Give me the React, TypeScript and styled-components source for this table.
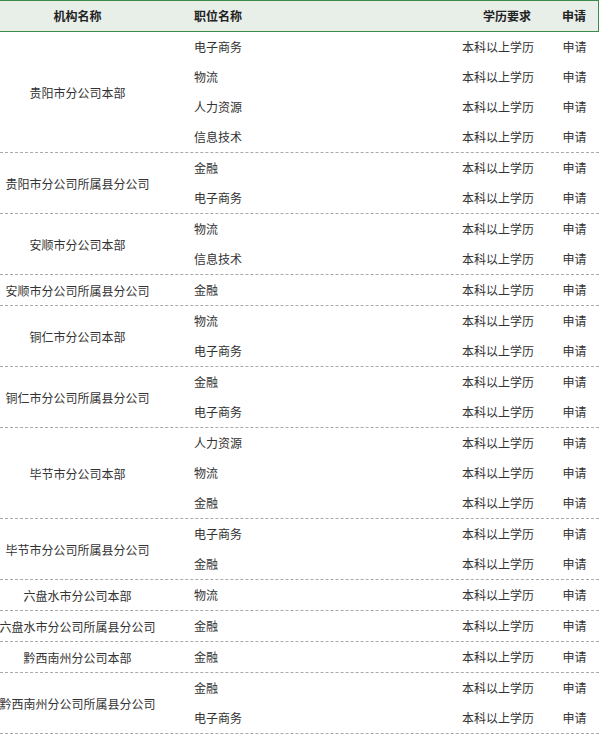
import React from "react";
import styled, { createGlobalStyle } from "styled-components";

const GlobalStyle = createGlobalStyle`
  body {
    margin: 0;
    background: #fff;
    font-family: "Noto Sans CJK SC", "Microsoft YaHei", sans-serif;
    font-size: 12px;
    color: #333;
  }
`;

const Table = styled.div`
  width: 599px;
`;

const Header = styled.div`
  display: grid;
  grid-template-columns: 155px 240px 155px 1fr;
  height: 30px;
  align-items: center;
  background: #e8efe9;
  border-top: 1px solid #3d8b47;
  border-bottom: 1px solid #3d8b47;
  border-right: 1px solid #3d8b47;
  font-weight: bold;
  color: #222;
`;

const Cell = styled.div<{ $align?: "left" | "right" | "center"; $pad?: string }>`
  text-align: ${(p) => p.$align || "left"};
  padding: ${(p) => p.$pad || "0"};
  white-space: nowrap;
  line-height: 30px;
`;

const Group = styled.div`
  display: flex;
  border-bottom: 1px dashed #aaa;
`;

const Org = styled.div`
  width: 155px;
  flex-shrink: 0;
  display: flex;
  align-items: center;
  justify-content: center;
  white-space: nowrap;
`;

const Jobs = styled.div`
  flex: 1;
  display: flex;
  flex-direction: column;
`;

const JobRow = styled.div`
  display: grid;
  grid-template-columns: 240px 155px 1fr;
  height: 30px;
  align-items: center;
`;

const Apply = styled.span`
  color: #333;
  cursor: pointer;
`;

const data: { org: string; jobs: string[] }[] = [
  { org: "贵阳市分公司本部", jobs: ["电子商务", "物流", "人力资源", "信息技术"] },
  { org: "贵阳市分公司所属县分公司", jobs: ["金融", "电子商务"] },
  { org: "安顺市分公司本部", jobs: ["物流", "信息技术"] },
  { org: "安顺市分公司所属县分公司", jobs: ["金融"] },
  { org: "铜仁市分公司本部", jobs: ["物流", "电子商务"] },
  { org: "铜仁市分公司所属县分公司", jobs: ["金融", "电子商务"] },
  { org: "毕节市分公司本部", jobs: ["人力资源", "物流", "金融"] },
  { org: "毕节市分公司所属县分公司", jobs: ["电子商务", "金融"] },
  { org: "六盘水市分公司本部", jobs: ["物流"] },
  { org: "六盘水市分公司所属县分公司", jobs: ["金融"] },
  { org: "黔西南州分公司本部", jobs: ["金融"] },
  { org: "黔西南州分公司所属县分公司", jobs: ["金融", "电子商务"] },
];

export default function App() {
  return (
    <>
      <GlobalStyle />
      <Table>
        <Header>
          <Cell $align="center">机构名称</Cell>
          <Cell $pad="0 0 0 39px">职位名称</Cell>
          <Cell $align="right" $pad="0 19px 0 0">学历要求</Cell>
          <Cell $align="center">申请</Cell>
        </Header>
        {data.map((g) => (
          <Group key={g.org}>
            <Org>{g.org}</Org>
            <Jobs>
              {g.jobs.map((job) => (
                <JobRow key={job}>
                  <Cell $pad="0 0 0 39px">{job}</Cell>
                  <Cell $align="right" $pad="0 16px 0 0">本科以上学历</Cell>
                  <Cell $align="center">
                    <Apply>申请</Apply>
                  </Cell>
                </JobRow>
              ))}
            </Jobs>
          </Group>
        ))}
      </Table>
    </>
  );
}
